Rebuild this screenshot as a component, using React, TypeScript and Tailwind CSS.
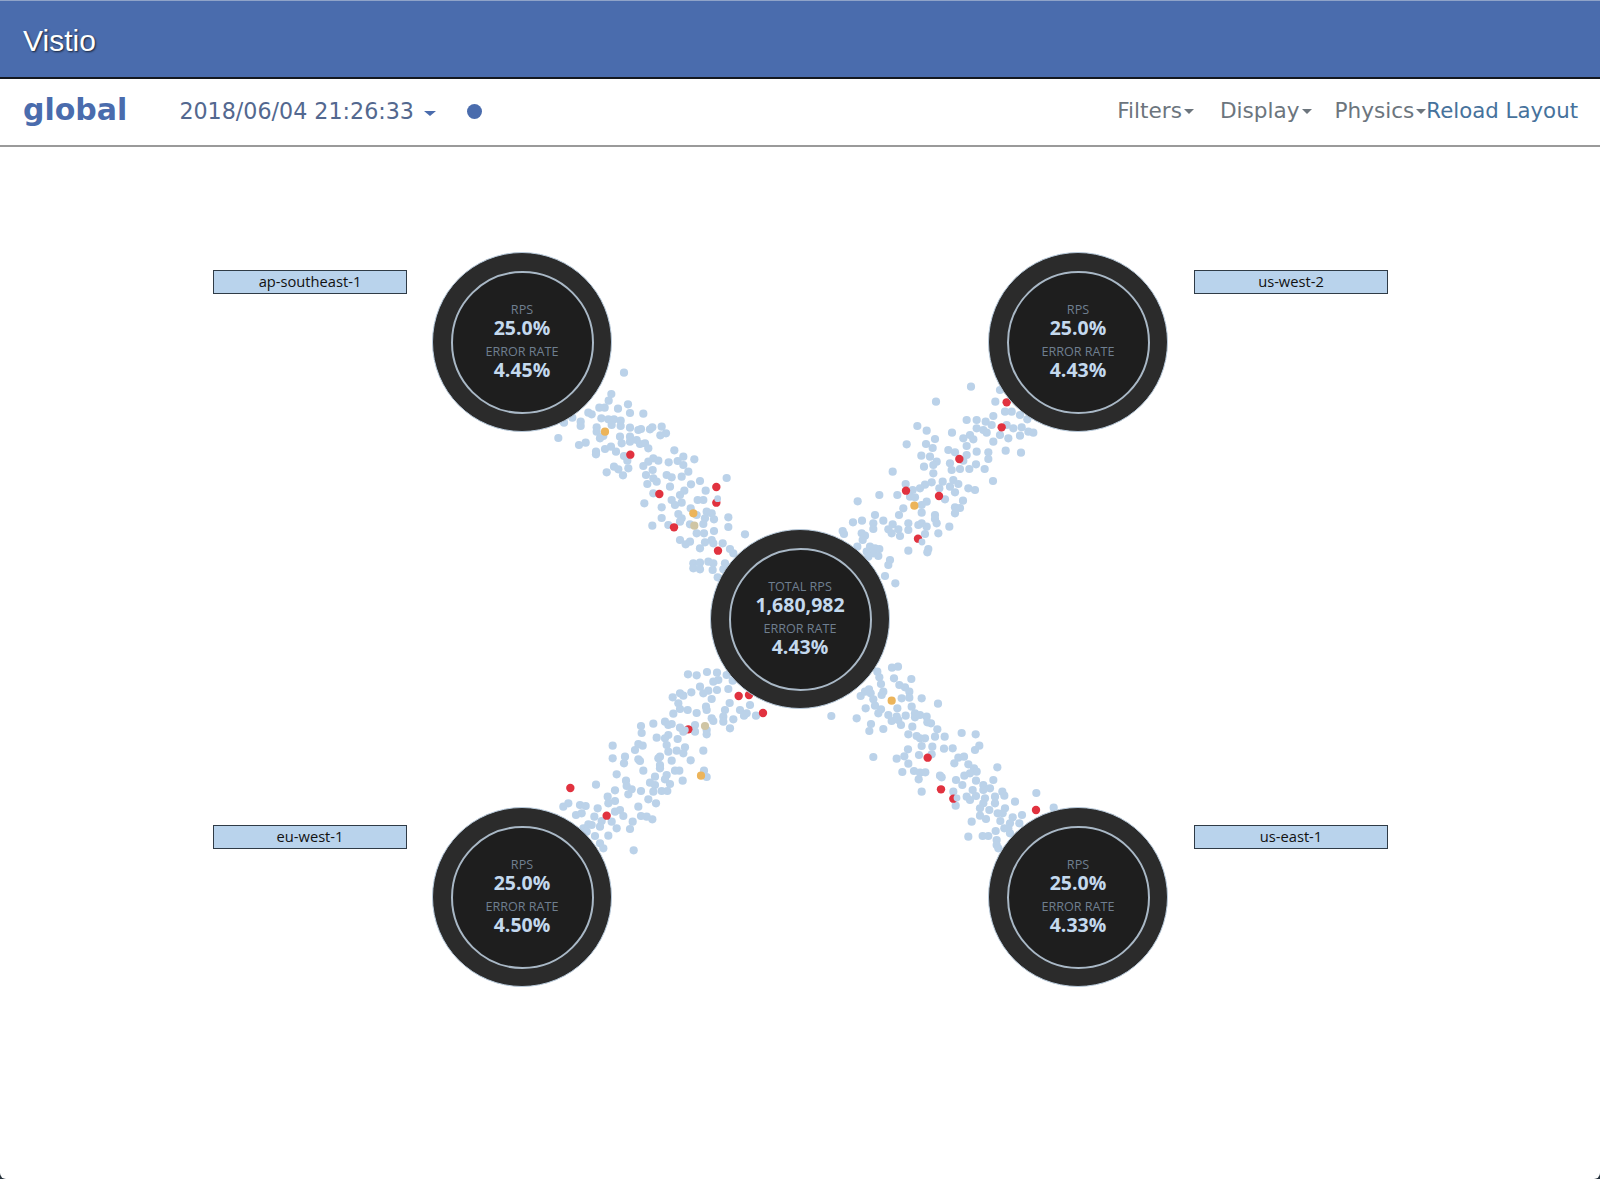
type Pt = [number, number];

// dots read off 3x crops, so each group has the crop's origin
const groups: { ox: number; oy: number; blue: Pt[]; red: Pt[]; amber: Pt[]; tan: Pt[]; over: Pt[] }[] = [
    {
        ox: 540, oy: 370,
        blue: [[252,8],[214,72],[206,92],[178,113],[194,113],[234,116],[264,103],[270,129],[310,131],[145,128],[155,133],[122,155],[122,168],[97,143],[72,158],[184,145],[205,148],[222,148],[242,152],[215,165],[242,168],[170,172],[170,185],[270,173],[295,180],[303,177],[330,178],[337,172],[365,170],[378,190],[361,196],[55,204],[117,225],[137,218],[180,205],[190,198],[240,200],[245,220],[270,200],[270,215],[290,210],[300,222],[315,220],[325,235],[195,237],[213,230],[228,245],[168,245],[168,253],[403,241],[252,258],[262,272],[265,295],[222,290],[235,298],[200,307],[249,316],[340,265],[355,272],[325,275],[310,288],[338,300],[386,277],[413,273],[430,260],[463,268],[430,285],[445,305],[425,320],[395,322],[380,315],[318,315],[340,325],[350,335],[322,342],[480,333],[453,343],[560,324],[390,350],[497,362],[433,362],[420,375],[340,370],[313,400],[395,390],[405,405],[425,398],[365,412],[473,390],[490,390],[365,444],[565,442],[565,471],[337,467],[385,465],[415,432],[425,445],[420,455],[452,415],[470,435],[500,425],[515,430],[495,445],[522,448],[490,462],[450,463],[470,490],[492,490],[522,483],[615,493],[420,510],[450,515],[437,523],[495,517],[515,510],[520,520],[480,535],[548,520],[570,537],[580,550],[460,580],[460,595],[480,578],[480,598],[505,575],[520,580],[518,600],[555,580],[550,598],[533,622]],
        red: [[271,254],[358,372],[529,351],[529,398],[402,472],[534,542]],
        amber: [[195,185],[460,430]],
        tan: [[463,467]],
        over: [[533,386]],
    },
    {
        ox: 820, oy: 370,
        blue: [[453,50],[348,95],[526,95],[540,60],[555,125],[575,125],[600,135],[622,148],[440,150],[470,150],[520,138],[497,155],[292,168],[320,182],[396,188],[470,175],[490,180],[515,165],[500,188],[560,165],[605,172],[625,185],[640,188],[580,175],[600,197],[540,195],[565,205],[520,215],[345,207],[450,195],[430,205],[460,208],[260,223],[318,222],[338,234],[440,228],[385,240],[405,247],[470,245],[505,247],[505,267],[557,242],[603,248],[304,257],[330,260],[350,275],[340,285],[440,255],[430,272],[390,280],[468,283],[312,290],[448,297],[494,297],[420,297],[395,300],[218,305],[340,310],[519,333],[257,342],[315,344],[335,337],[368,335],[400,330],[415,342],[390,350],[358,355],[300,355],[278,360],[445,355],[465,360],[405,367],[178,375],[232,375],[270,380],[285,382],[375,388],[429,392],[113,394],[320,395],[305,405],[250,415],[405,412],[420,414],[405,430],[305,428],[237,435],[165,435],[345,435],[345,447],[99,457],[126,452],[190,452],[160,460],[160,477],[350,460],[305,460],[265,460],[218,463],[320,470],[388,470],[205,478],[235,478],[265,480],[295,465],[215,490],[240,498],[355,490],[315,492],[68,483],[72,492],[125,490],[135,497],[128,510],[112,530],[150,530],[165,535],[178,537],[140,545],[160,550],[175,558],[145,560],[265,542],[325,537],[322,547],[210,570],[205,585],[195,618],[226,640]],
        red: [[560,97],[545,172],[418,267],[258,362],[357,378],[294,506]],
        amber: [[283,407]],
        tan: [],
        over: [[306,516]],
    },
    {
        ox: 540, oy: 660,
        blue: [[444,43],[470,46],[501,36],[531,38],[560,45],[520,65],[535,60],[578,62],[480,80],[565,87],[398,112],[420,100],[430,107],[454,97],[490,100],[505,92],[531,90],[515,117],[569,129],[630,135],[415,130],[420,147],[443,150],[498,140],[500,150],[555,150],[600,150],[620,160],[400,161],[470,159],[612,167],[648,167],[550,170],[515,175],[580,178],[550,185],[520,183],[340,191],[303,198],[375,185],[395,192],[385,195],[420,203],[465,195],[500,210],[570,205],[305,219],[430,215],[465,215],[500,223],[385,225],[350,233],[375,235],[413,237],[218,257],[295,252],[308,257],[285,270],[380,255],[385,275],[435,262],[410,272],[430,280],[490,272],[218,295],[255,290],[252,310],[295,298],[300,303],[355,295],[360,290],[395,302],[452,301],[360,315],[360,325],[310,332],[405,332],[418,332],[492,332],[230,343],[345,350],[380,345],[500,351],[375,358],[428,362],[258,362],[330,368],[168,374],[345,375],[390,372],[260,378],[275,388],[225,391],[303,393],[340,395],[365,393],[382,393],[265,403],[203,410],[225,423],[205,430],[325,418],[348,430],[85,430],[70,440],[120,435],[137,438],[173,445],[295,440],[240,450],[225,455],[250,468],[108,465],[125,460],[163,470],[303,468],[320,470],[337,478],[185,483],[215,485],[278,485],[145,493],[155,495],[130,505],[140,515],[180,500],[230,505],[270,507],[205,527],[165,528],[180,550],[190,565],[281,571]],
        red: [[596,108],[627,105],[669,159],[91,384],[200,467],[445,208]],
        amber: [[483,347]],
        tan: [[495,198]],
        over: [[436,210]],
    },
    {
        ox: 820, oy: 660,
        blue: [[216,23],[234,20],[172,35],[178,52],[222,55],[274,57],[183,72],[238,75],[255,82],[190,95],[147,88],[135,95],[152,100],[268,95],[122,108],[160,118],[185,105],[245,115],[268,113],[305,115],[354,131],[137,145],[165,137],[183,148],[175,160],[232,145],[275,140],[34,168],[110,175],[205,165],[257,167],[285,160],[285,172],[300,165],[320,170],[230,170],[215,183],[235,180],[243,195],[322,187],[333,190],[153,192],[148,213],[190,207],[277,200],[352,208],[265,223],[290,228],[300,235],[315,235],[345,230],[374,230],[425,219],[467,223],[305,258],[337,260],[478,257],[465,270],[264,268],[372,266],[398,265],[160,291],[230,296],[253,289],[297,285],[335,283],[415,293],[432,290],[403,310],[445,313],[265,311],[532,322],[462,325],[470,335],[282,333],[300,338],[316,337],[247,336],[433,347],[450,340],[360,347],[365,352],[296,358],[408,360],[468,362],[520,360],[427,375],[490,375],[510,385],[305,395],[458,390],[400,395],[547,395],[553,407],[649,399],[490,390],[525,410],[440,410],[450,420],[468,408],[407,437],[495,415],[585,425],[525,430],[490,430],[480,445],[555,445],[508,450],[533,460],[548,460],[480,467],[498,477],[606,465],[578,472],[455,485],[541,483],[598,490],[570,490],[565,505],[553,505],[527,513],[570,520],[445,530],[488,528],[505,528],[530,540],[530,555],[535,565],[701,443]],
        red: [[323,293],[363,388],[400,416],[648,450]],
        amber: [[215,122]],
        tan: [],
        over: [[411,414]],
    },
];

const Dots = ({ g, pts, fill, r }: { g: { ox: number; oy: number }; pts: Pt[]; fill: string; r: string }) => (
    <>
        {pts.map(([x, y], j) => (
            <circle key={j} cx={g.ox + x / 3} cy={g.oy + y / 3} r={r} fill={fill} />
        ))}
    </>
);

const Particles = () => (
    <svg viewBox="0 147 1600 1032" className="absolute inset-0 h-full w-full blur-[0.5px]">
        {groups.map((g, i) => (
            <g key={i}>
                <Dots g={g} pts={g.blue} fill="#bbd2e9" r="4.1" />
                <Dots g={g} pts={g.tan} fill="#cfc5a4" r="4.1" />
                <Dots g={g} pts={g.amber} fill="#ecb45a" r="4.1" />
                <Dots g={g} pts={g.red} fill="#e1323f" r="4.2" />
                <Dots g={g} pts={g.over} fill="#bbd2e9" r="3.4" />
            </g>
        ))}
    </svg>
);

const Node = ({ className, top, value, error }: { className: string; top: string; value: string; error: string }) => (
    <div className={`absolute flex h-[180px] w-[180px] items-center justify-center rounded-full border border-[#b9cbdc] bg-[#2b2b2b] ${className}`}>
        <div className="flex h-[143px] w-[143px] flex-col items-center justify-center rounded-full border-2 border-[#a9b8c6] bg-[#1e1e1e] pb-[2px] font-['Open_Sans',sans-serif] leading-none">
            <span className="text-[12.6px] leading-[15px] font-medium text-[#6f7f90]">{top}</span>
            <span className="text-[19.5px] leading-[22px] font-bold text-[#c4d9ee]">{value}</span>
            <span className="mt-[5px] text-[12.6px] leading-[15px] font-medium text-[#6f7f90]">ERROR RATE</span>
            <span className="text-[19.5px] leading-[22px] font-bold text-[#c4d9ee]">{error}</span>
        </div>
    </div>
);

const Label = ({ className, text }: { className: string; text: string }) => (
    <div className={`absolute flex h-[24px] w-[194px] items-center justify-center border border-[#2f3b46] bg-[#b9d3ec] pb-[1px] font-['Open_Sans',sans-serif] text-[14.7px] text-[#111] ${className}`}>
        {text}
    </div>
);

const Menu = ({ text }: { text: string }) => (
    <span className="flex items-center text-[21.6px]">
        {text}
        <span className="ml-[2px] mt-[2px] h-0 w-0 border-x-[5px] border-t-[5px] border-x-transparent border-t-[#6c757d]" />
    </span>
);

export default function App() {
    return (
        <div className="h-[1179px] w-full bg-[#26323c]">
            <div className="flex h-full flex-col overflow-hidden rounded-b-[6px] bg-white">
                <header className="flex h-[79px] shrink-0 items-center border-t border-b-2 border-t-[#8fa3c8] border-b-[#14181f] bg-[#4a6cad] pl-[23px] pt-[2px]">
                    <span className="font-['Liberation_Sans',sans-serif] text-[30px] text-white [text-shadow:1px_1px_2px_rgba(0,0,0,0.7)]">Vistio</span>
                </header>
                <nav className="flex h-[68px] shrink-0 items-center border-b-2 border-[#9a9a9a] pb-[1px] pl-[23px] pr-[22px] font-['DejaVu_Sans',sans-serif]">
                    <span className="mb-[5px] text-[30px] font-bold text-[#4a6cad]">global</span>
                    <span className="ml-[52px] text-[22.2px] text-[#53688f]">2018/06/04 21:26:33</span>
                    <span className="ml-[10px] mt-[3px] h-0 w-0 border-x-[6px] border-t-[5px] border-x-transparent border-t-[#4a6cad]" />
                    <span className="ml-[31px] h-[15px] w-[15px] rounded-full bg-[#4a6cad]" />
                    <div className="ml-auto mb-[1px] flex items-center text-[21.3px] text-[#6c757d]">
                        <Menu text="Filters" />
                        <span className="w-[26px]" />
                        <Menu text="Display" />
                        <span className="w-[23px]" />
                        <Menu text="Physics" />
                        <span className="text-[#46729c]">Reload Layout</span>
                    </div>
                </nav>
                <main className="relative flex-1">
                    <Particles />
                    <Label className="left-[213px] top-[123px]" text="ap-southeast-1" />
                    <Label className="left-[1194px] top-[123px]" text="us-west-2" />
                    <Label className="left-[213px] top-[678px]" text="eu-west-1" />
                    <Label className="left-[1194px] top-[678px]" text="us-east-1" />
                    <Node className="left-[432px] top-[105px]" top="RPS" value="25.0%" error="4.45%" />
                    <Node className="left-[988px] top-[105px]" top="RPS" value="25.0%" error="4.43%" />
                    <Node className="left-[710px] top-[382px]" top="TOTAL RPS" value="1,680,982" error="4.43%" />
                    <Node className="left-[432px] top-[660px]" top="RPS" value="25.0%" error="4.50%" />
                    <Node className="left-[988px] top-[660px]" top="RPS" value="25.0%" error="4.33%" />
                </main>
            </div>
        </div>
    );
}
